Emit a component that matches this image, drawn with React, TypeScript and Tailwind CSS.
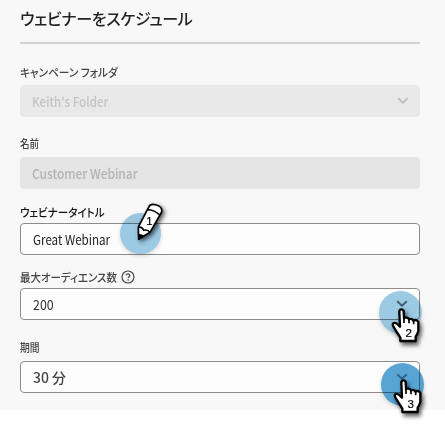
import type { ReactNode } from 'react';

function Chevron({ color }: { color: string }) {
  return (
    <svg width="12" height="8" viewBox="0 0 12 8" fill="none" stroke={color} strokeWidth="1.9">
      <path d="M1.2 1.2 L6 5.8 L10.8 1.2" />
    </svg>
  );
}

function Label({ className, textClass, children }: { className: string; textClass: string; children: ReactNode }) {
  return (
    <div className={`h-4 whitespace-nowrap text-[11.5px] font-medium leading-4 ${className}`}>
      <span className={`inline-block origin-left ${textClass}`}>{children}</span>
    </div>
  );
}

function Field({ className, children }: { className: string; children: ReactNode }) {
  return (
    <div className={`flex h-8 w-[400px] items-center justify-between rounded pl-3 pr-[11px] text-[13.5px] leading-5 ${className}`}>
      {children}
    </div>
  );
}

function Hand({ digit, className }: { digit: string; className: string }) {
  return (
    <svg className={`absolute overflow-visible ${className}`} width="30" height="37" viewBox="64 68 90 111">
      <path
        d="M89 79 Q89 72 95 72 Q102 72 102 79 L103 99 Q106 95 111 97 Q116 98 118 102 Q127 98 131 106 Q141 101 146 110 V137 Q143 147 138 154 V167 H92 V157 L73 127 Q66 116 72 113 Q79 110 91 124 Z"
        fill="#fff"
        stroke="#000"
        strokeWidth="7"
        strokeLinejoin="round"
      />
      <path d="M103 98 V113 M118 101 V114 M132 106 V117" stroke="#000" strokeWidth="5" />
      <text x="117" y="155" textAnchor="middle" className="font-['Liberation_Sans',sans-serif] text-[35px]" fill="#000" stroke="#000" strokeWidth="0.5">
        {digit}
      </text>
    </svg>
  );
}

function Pencil() {
  return (
    <svg className="absolute left-[110px] top-[195px] overflow-visible drop-shadow-[2px_2px_2px_rgba(0,0,0,0.65)]" width="70" height="65" viewBox="0 0 210 195">
      <path d="M86 133 L85 96 L117 35 Q121 25 139 30 Q158 35 155 51 L120 112 Z" fill="#fff" stroke="#000" strokeWidth="5" strokeLinejoin="round" />
      <path d="M113 44 Q133 44 150 61 M85 97 Q96 94 101 106 Q113 102 120 112" fill="none" stroke="#000" strokeWidth="4.5" />
      <path d="M86 135 L86 117 Q96 116 103 124 Z" fill="#000" />
      <text x="118" y="90" textAnchor="middle" className="font-['Liberation_Sans',sans-serif] text-[34px]" fill="#000" stroke="#000" strokeWidth="0.6">
        1
      </text>
    </svg>
  );
}

export default function App() {
  return (
    <main className="relative h-[445px] w-[445px] overflow-hidden bg-white font-['Noto_Sans_CJK_JP',sans-serif]">
      <section className="h-[410px] bg-[#f8f8f8] pl-5">
        <h1 className="h-[42px] whitespace-nowrap pt-[6px] text-[16px] font-medium leading-6 tracking-[-0.3px] text-[#222] [font-feature-settings:'palt']">
          ウェビナーをスケジュール
        </h1>
        <div className="h-[2px] w-[400px] bg-[#d3d3d3]" />

        <Label className="mt-5 text-[#444] [font-feature-settings:'palt']" textClass="scale-x-[0.925]">
          キャンペーン フォルダ
        </Label>
        <Field className="mt-[5px] bg-[#e9e9e9] text-[#c3c3c3]">
          <span className="origin-left scale-x-[0.86] font-medium">Keith's Folder</span>
          <Chevron color="#bdbdbd" />
        </Field>

        <Label className="mt-[18px] text-[#444]" textClass="scale-x-[0.83]">
          名前
        </Label>
        <Field className="mt-[6px] bg-[#e5e5e5] text-[#b3b3b3]">
          <span className="origin-left scale-x-[0.885] font-medium">Customer Webinar</span>
        </Field>

        <Label className="mt-[15px] text-[#111] [font-feature-settings:'palt']" textClass="scale-x-[0.915]">
          ウェビナータイトル
        </Label>
        <Field className="mt-[3px] border border-[#8c8c8c] bg-[#fdfdfd] text-[#222]">
          <span className="origin-left scale-x-[0.86]">Great Webinar</span>
        </Field>

        <div className="mt-[14px] flex h-4 items-center">
          <Label className="w-[101px] text-[#444] [font-feature-settings:'palt']" textClass="scale-x-[0.91]">
            最大オーディエンス数
          </Label>
          <svg className="shrink-0" width="14" height="14" viewBox="0 0 14 14" fill="none">
            <circle cx="7" cy="7" r="6" stroke="#444" strokeWidth="1.2" />
            <path d="M5.1 5.3 C5.3 3.5 8.8 3.5 8.8 5.4 C8.8 6.7 7.1 6.8 7.1 8.3" stroke="#444" strokeWidth="1.2" />
            <circle cx="7.1" cy="10.1" r="0.8" fill="#444" />
          </svg>
        </div>
        <Field className="mt-[3px] border border-[#8c8c8c] bg-[#fdfdfd] text-[#333]">
          <span className="origin-left scale-x-[0.92]">200</span>
          <Chevron color="#66747c" />
        </Field>

        <Label className="mt-[19px] text-[#444]" textClass="scale-x-[0.85]">
          期間
        </Label>
        <Field className="mt-[6px] border border-[#8c8c8c] bg-[#fdfdfd] text-[#444]">
          <span className="text-[14px] font-medium">30 分</span>
          <Chevron color="#88949c" />
        </Field>
      </section>

      <div className="absolute left-[120px] top-[213px] size-[41px] rounded-full bg-[#9dcbe5] mix-blend-multiply shadow-[0_2px_4px_rgba(0,0,0,0.15)]" />
      <Pencil />
      <div className="absolute left-[379px] top-[291px] size-[43px] rounded-full bg-[#9dcbe5] mix-blend-multiply shadow-[0_2px_4px_rgba(0,0,0,0.12)]" />
      <Hand digit="2" className="left-[391px] top-[308px] drop-shadow-[2px_3px_2px_rgba(0,0,0,0.65)]" />
      <div className="absolute left-[381px] top-[363px] size-[43px] rounded-full bg-[#59a6d6] mix-blend-multiply shadow-[0_2px_4px_rgba(0,0,0,0.15)]" />
      <Hand digit="3" className="left-[393px] top-[379px] drop-shadow-[2px_3px_2px_rgba(0,0,0,0.65)]" />
    </main>
  );
}
